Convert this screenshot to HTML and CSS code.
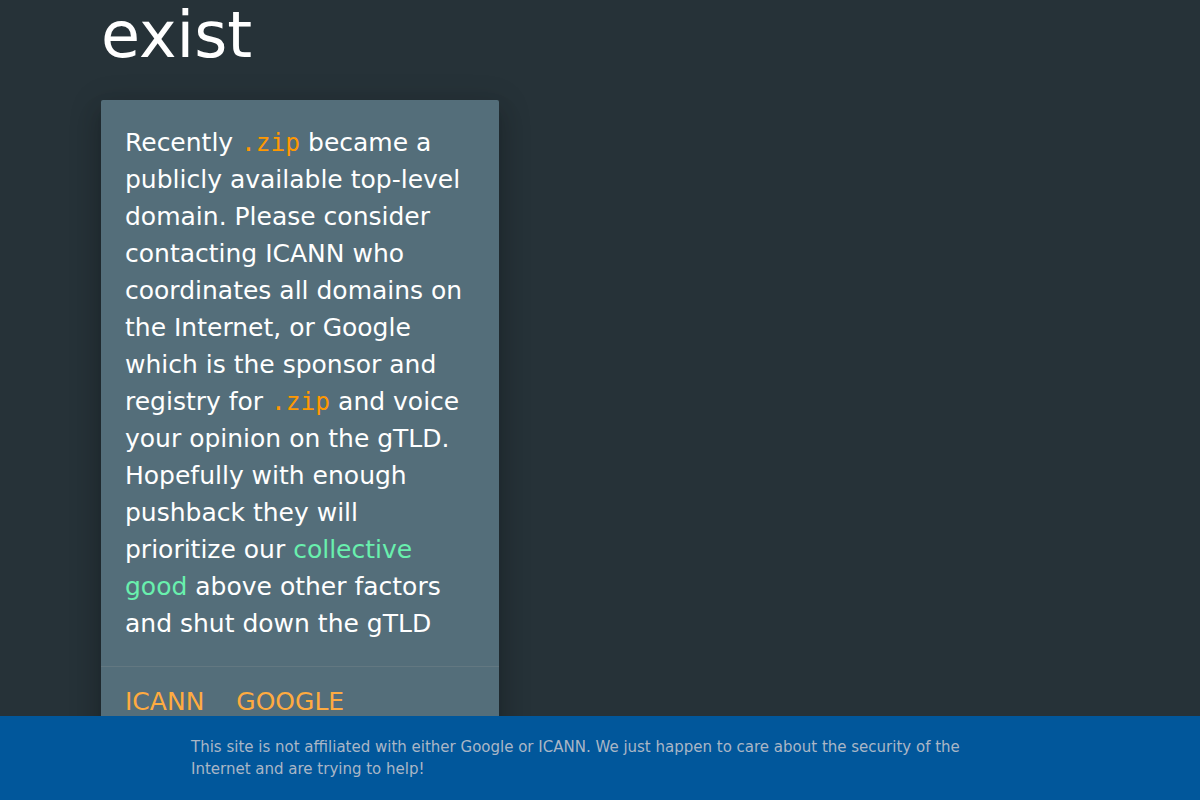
FILE: index.html
```html
<!DOCTYPE html>
<html lang="en">
<head>
<meta charset="utf-8">
<title>.zip</title>
<link rel="stylesheet" href="styles.css">
</head>
<body>
<main class="main">
  <h1 class="title">exist</h1>
  <div class="card">
    <div class="card-content">
      <p>Recently <code class="tld">.zip</code> became a publicly available top-level domain. Please consider contacting ICANN who coordinates all domains on the Internet, or Google which is the sponsor and registry for <code class="tld">.zip</code> and voice your opinion on the gTLD. Hopefully with enough pushback they will prioritize our <a class="good" href="#">collective good</a> above other factors and shut down the gTLD</p>
    </div>
    <div class="card-action">
      <a href="#">ICANN</a> <a href="#">GOOGLE</a>
    </div>
  </div>
</main>
<footer class="footer">
  <p class="footer-text">This site is not affiliated with either Google or ICANN. We just happen to care about the security of the Internet and are trying to help!</p>
</footer>
</body>
</html>
```
FILE: styles.css
```css
html, body {
  margin: 0;
  padding: 0;
}
body {
  background: #263238;
  color: #fff;
  font-family: "DejaVu Sans", sans-serif;
  min-height: 900px;
}
.main {
  padding-left: 101px;
}
.title {
  margin: -2px 0 28px 0;
  font-size: 63.5px;
  font-weight: normal;
  line-height: 74px;
  color: #fff;
}
.card {
  width: 398px;
  background: #546e7a;
  border-radius: 2px;
  box-shadow: 0 16px 24px 2px rgba(0,0,0,0.14), 0 6px 30px 5px rgba(0,0,0,0.12), 0 8px 10px -7px rgba(0,0,0,0.2);
}
.card-content {
  padding: 24px 26px 24px 24px;
}
.card-content p {
  margin: 0;
  font-size: 25px;
  line-height: 37px;
}
.tld {
  font-family: "DejaVu Sans Mono", monospace;
  font-size: 24.5px;
  line-height: 0;
  color: #ff9800;
}
.good {
  color: #69f0ae;
  text-decoration: none;
}
.card-action {
  border-top: 1px solid rgba(160,160,160,0.2);
  padding: 16px 24px;
  font-size: 25px;
  line-height: 37px;
  height: 60px;
}
.card-action a {
  color: #ffab40;
  text-decoration: none;
  margin-right: 24px;
}
.footer {
  position: fixed;
  left: 0;
  right: 0;
  bottom: 0;
  height: 84px;
  box-sizing: border-box;
  background: #01579b;
  padding: 20px 0 0 191px;
}
.footer-text {
  margin: 0;
  width: 800px;
  font-size: 15px;
  line-height: 22px;
  color: #aab6c6;
}
```
